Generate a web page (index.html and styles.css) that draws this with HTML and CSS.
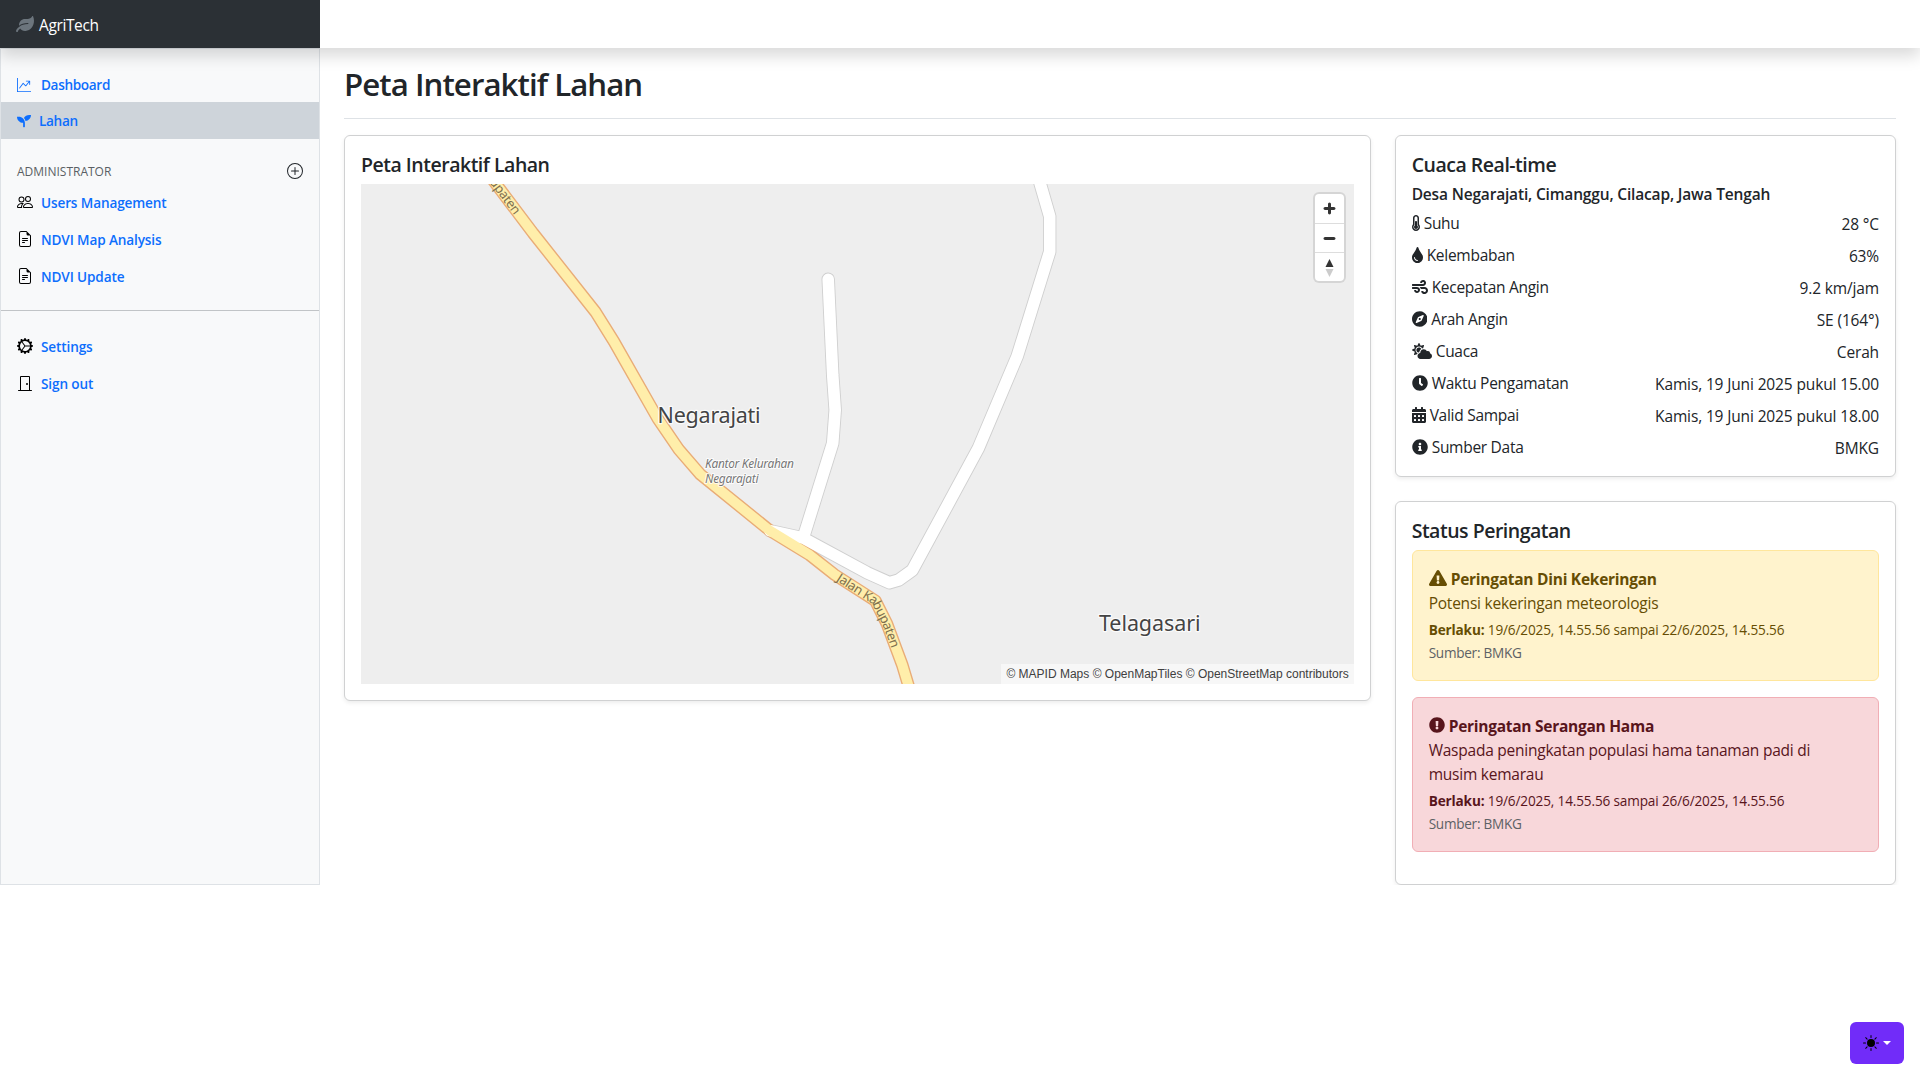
FILE: index.html
```html
<!DOCTYPE html>
<html lang="id">
<head>
<meta charset="utf-8">
<title>AgriTech - Peta Interaktif Lahan</title>
<link rel="stylesheet" href="styles.css">
</head>
<body>
<header class="navbar">
  <a class="brand" href="#">
    <svg class="brand-icon" viewBox="0 0 576 512"><path d="M546.2 9.7c-5.6-12.5-21.6-13-28.3-1.2C486.9 62.4 431.4 96 368 96h-80C182 96 96 182 96 288c0 7 .8 13.7 1.5 20.5C161.3 262.8 253.4 224 384 224c8.8 0 16 7.2 16 16s-7.2 16-16 16C132.6 256 26 410.1 2.4 468c-6.6 16.3 1.2 34.9 17.5 41.6 16.4 6.8 35-1.1 41.8-17.3 1.5-3.6 20.9-47.9 71.9-90.6 32.4 43.9 94 85.8 174.9 77.2C465.5 467.5 576 326.7 576 154.3c0-50.2-10.8-102.2-29.8-144.6z"/></svg>
    <span>AgriTech</span>
  </a>
</header>

<div class="layout">
  <nav class="sidebar">
    <a class="nav-link" href="#">
      <svg class="icon-small icon-chart" viewBox="0 0 16 16"><path fill-rule="evenodd" d="M0 0h1v15h15v1H0zm10 3.5a.5.5 0 0 1 .5-.5h4a.5.5 0 0 1 .5.5v4a.5.5 0 0 1-1 0V4.9l-3.613 4.417a.5.5 0 0 1-.74.037L7.06 6.767l-3.656 5.027a.5.5 0 0 1-.808-.588l4-5.5a.5.5 0 0 1 .758-.06l2.609 2.61L13.445 4H10.5a.5.5 0 0 1-.5-.5"/></svg>
      <span>Dashboard</span>
    </a>
    <a class="nav-link active" href="#">
      <svg class="icon-small" viewBox="0 0 512 512"><path d="M64 96H0c0 123.7 100.3 224 224 224v144c0 8.8 7.2 16 16 16h32c8.8 0 16-7.2 16-16V320C288 196.3 187.7 96 64 96zm384-64c-84.2 0-157.4 46.5-195.7 115.2 27.7 30.2 48.2 66.9 59 107.6C424 243.1 512 147.9 512 32h-64z"/></svg>
      <span>Lahan</span>
    </a>
    <div class="nav-heading">
      <span>Administrator</span>
      <svg viewBox="0 0 16 16"><path d="M8 15A7 7 0 1 1 8 1a7 7 0 0 1 0 14m0 1A8 8 0 1 0 8 0a8 8 0 0 0 0 16"/><path d="M8 4a.5.5 0 0 1 .5.5v3h3a.5.5 0 0 1 0 1h-3v3a.5.5 0 0 1-1 0v-3h-3a.5.5 0 0 1 0-1h3v-3A.5.5 0 0 1 8 4"/></svg>
    </div>
    <a class="nav-link" href="#">
      <svg class="icon" viewBox="0 0 16 16"><path d="M15 14s1 0 1-1-1-4-5-4-5 3-5 4 1 1 1 1zm-7.978-1L7 12.996c.001-.264.167-1.03.76-1.72C8.312 10.629 9.282 10 11 10c1.717 0 2.687.63 3.24 1.276.593.69.758 1.457.76 1.72l-.008.002-.014.002zM11 7a2 2 0 1 0 0-4 2 2 0 0 0 0 4m3-2a3 3 0 1 1-6 0 3 3 0 0 1 6 0M6.936 9.28a6 6 0 0 0-1.23-.247A7 7 0 0 0 5 9c-4 0-5 3-5 4q0 1 1 1h4.216A2.24 2.24 0 0 1 5 13c0-1.01.377-2.042 1.09-2.904.243-.294.526-.569.846-.816M4.92 10A5.5 5.5 0 0 0 4 13H1c0-.26.164-1.03.76-1.724.545-.636 1.492-1.256 3.16-1.275ZM1.5 5.5a3 3 0 1 1 6 0 3 3 0 0 1-6 0m3-2a2 2 0 1 0 0 4 2 2 0 0 0 0-4"/></svg>
      <span>Users Management</span>
    </a>
    <a class="nav-link" href="#">
      <svg class="icon" viewBox="0 0 16 16"><path d="M5.5 7a.5.5 0 0 0 0 1h5a.5.5 0 0 0 0-1zM5 9.5a.5.5 0 0 1 .5-.5h5a.5.5 0 0 1 0 1h-5a.5.5 0 0 1-.5-.5m0 2a.5.5 0 0 1 .5-.5h2a.5.5 0 0 1 0 1h-2a.5.5 0 0 1-.5-.5"/><path d="M9.5 0H4a2 2 0 0 0-2 2v12a2 2 0 0 0 2 2h8a2 2 0 0 0 2-2V4.5zm0 1v2A1.5 1.5 0 0 0 11 4.5h2V14a1 1 0 0 1-1 1H4a1 1 0 0 1-1-1V2a1 1 0 0 1 1-1z"/></svg>
      <span>NDVI Map Analysis</span>
    </a>
    <a class="nav-link" href="#">
      <svg class="icon" viewBox="0 0 16 16"><path d="M5.5 7a.5.5 0 0 0 0 1h5a.5.5 0 0 0 0-1zM5 9.5a.5.5 0 0 1 .5-.5h5a.5.5 0 0 1 0 1h-5a.5.5 0 0 1-.5-.5m0 2a.5.5 0 0 1 .5-.5h2a.5.5 0 0 1 0 1h-2a.5.5 0 0 1-.5-.5"/><path d="M9.5 0H4a2 2 0 0 0-2 2v12a2 2 0 0 0 2 2h8a2 2 0 0 0 2-2V4.5zm0 1v2A1.5 1.5 0 0 0 11 4.5h2V14a1 1 0 0 1-1 1H4a1 1 0 0 1-1-1V2a1 1 0 0 1 1-1z"/></svg>
      <span>NDVI Update</span>
    </a>
    <hr class="nav-divider">
    <a class="nav-link" href="#">
      <svg class="icon" viewBox="0 0 16 16"><path d="M7.068.727c.243-.97 1.62-.97 1.864 0l.071.286a.96.96 0 0 0 1.622.434l.205-.211c.695-.719 1.888-.03 1.613.931l-.08.284a.96.96 0 0 0 1.187 1.187l.283-.081c.96-.275 1.65.918.931 1.613l-.211.205a.96.96 0 0 0 .434 1.622l.286.071c.97.243.97 1.62 0 1.864l-.286.071a.96.96 0 0 0-.434 1.622l.211.205c.719.695.03 1.888-.931 1.613l-.284-.08a.96.96 0 0 0-1.187 1.187l.081.283c.275.96-.918 1.65-1.613.931l-.205-.211a.96.96 0 0 0-1.622.434l-.071.286c-.243.97-1.62.97-1.864 0l-.071-.286a.96.96 0 0 0-1.622-.434l-.205.211c-.695.719-1.888.03-1.613-.931l.08-.284a.96.96 0 0 0-1.186-1.187l-.284.081c-.96.275-1.65-.918-.931-1.613l.211-.205a.96.96 0 0 0-.434-1.622l-.286-.071c-.97-.243-.97-1.62 0-1.864l.286-.071a.96.96 0 0 0 .434-1.622l-.211-.205c-.719-.695-.03-1.888.931-1.613l.284.08a.96.96 0 0 0 1.187-1.186l-.081-.284c-.275-.96.918-1.65 1.613-.931l.205.211a.96.96 0 0 0 1.622-.434zM12.973 8.5H8.25l-2.834 3.779A4.998 4.998 0 0 0 12.973 8.5m0-1a4.998 4.998 0 0 0-7.557-3.779l2.834 3.78zM5.048 3.967l-.087.065zm-.431.355A4.98 4.98 0 0 0 3.002 8c0 1.455.622 2.765 1.615 3.678L7.375 8zm.344 7.646.087.065z"/></svg>
      <span>Settings</span>
    </a>
    <a class="nav-link" href="#">
      <svg class="icon" viewBox="0 0 16 16"><path d="M3 2a1 1 0 0 1 1-1h8a1 1 0 0 1 1 1v13h1.5a.5.5 0 0 1 0 1h-13a.5.5 0 0 1 0-1H3zm1 13h8V2H4z"/><path d="M9 9a1 1 0 1 0 2 0 1 1 0 0 0-2 0"/></svg>
      <span>Sign out</span>
    </a>
  </nav>

  <main class="main">
    <div class="page-head"><h1>Peta Interaktif Lahan</h1></div>
    <div class="columns">
      <section class="card">
        <h2>Peta Interaktif Lahan</h2>
        <div class="map">
          <svg class="map-canvas" viewBox="361 184 993 500">
            <defs>
              <path id="label-south" d="M834.7 574.7L875.3 600.7L886.7 623.3L902.3 665L912 697"/>
              <path id="label-north" d="M435 105L496 184L533 233"/>
            </defs>
            <g class="road minor casing">
              <path d="M770 530.7L803 538L867 572.7L889.3 582.7L898.7 580L912.3 570.3L978.3 448.3L1017.3 356L1049.7 251.7V216.3L1037.4 174"/>
              <path d="M828.2 279.3L832.7 375L835.2 410L832.7 443.3L803.5 537"/>
            </g>
            <path class="road major casing" d="M484 168L496 184L533 233L595.5 312L614 341.7L658 419L679 449.7L700.3 474.3L770 530.7L809.7 555L834.7 574.7L875.3 600.7L886.7 623.3L902.3 665L911 694"/>
            <g class="road minor fill">
              <path d="M770 530.7L803 538L867 572.7L889.3 582.7L898.7 580L912.3 570.3L978.3 448.3L1017.3 356L1049.7 251.7V216.3L1037.4 174"/>
              <path d="M828.2 279.3L832.7 375L835.2 410L832.7 443.3L803.5 537"/>
            </g>
            <path class="road major fill" d="M484 168L496 184L533 233L595.5 312L614 341.7L658 419L679 449.7L700.3 474.3L770 530.7L809.7 555L834.7 574.7L875.3 600.7L886.7 623.3L902.3 665L911 694"/>
            <text class="road-label" dy="4.3"><textPath href="#label-south" startOffset="4" textLength="95">Jalan Kabupaten</textPath></text>
            <text class="road-label" dy="4.3"><textPath href="#label-north" startOffset="94" textLength="42">upaten</textPath></text>
            <text class="place" x="657.6" y="422.7" textLength="103">Negarajati</text>
            <text class="place" x="1099" y="630.7" textLength="101.5">Telagasari</text>
            <text class="poi" x="705" y="468" textLength="89">Kantor Kelurahan</text>
            <text class="poi" x="705" y="482.8" textLength="53.5">Negarajati</text>
          </svg>
          <div class="map-controls">
            <button type="button"><svg viewBox="0 0 29 29"><path d="M14.5 8.5c-.75 0-1.5.75-1.5 1.5v3h-3c-.75 0-1.5.75-1.5 1.5S9.25 16 10 16h3v3c0 .75.75 1.5 1.5 1.5S16 19.750 16 19v-3h3c.75 0 1.5-.75 1.5-1.5S19.750 13 19 13h-3v-3c0-.75-.75-1.5-1.5-1.5"/></svg></button>
            <button type="button"><svg viewBox="0 0 29 29"><path d="M10 13c-.75 0-1.5.75-1.5 1.5S9.25 16 10 16h9c.75 0 1.5-.75 1.5-1.5S19.750 13 19 13z"/></svg></button>
            <button type="button"><svg viewBox="0 0 29 29"><path d="m10.5 14 4-8 4 8z"/><path class="south" d="m10.5 16 4 8 4-8z"/></svg></button>
          </div>
          <div class="attribution">© MAPID Maps © OpenMapTiles © OpenStreetMap contributors</div>
        </div>
      </section>

      <div class="side">
        <section class="card">
          <h2>Cuaca Real-time</h2>
          <h3>Desa Negarajati, Cimanggu, Cilacap, Jawa Tengah</h3>
          <ul class="weather">
            <li><span class="label"><svg width="8" viewBox="0 0 256 512"><path d="M192 384c0 35.346-28.654 64-64 64s-64-28.654-64-64c0-23.685 12.876-44.349 32-55.417V224c0-17.673 14.327-32 32-32s32 14.327 32 32v104.583c19.124 11.068 32 31.732 32 55.417zm32-84.653c19.912 22.563 32 52.194 32 84.653 0 70.696-57.303 128-128 128-.299 0-.609-.001-.909-.003C56.789 511.509-.357 453.636.002 383.333.166 351.135 12.245 321.756 32 299.347V96c0-53.019 42.981-96 96-96s96 42.981 96 96v203.347zM208 384c0-34.339-19.37-52.19-32-66.502V96c0-26.467-21.533-48-48-48S80 69.533 80 96v221.498c-12.732 14.428-31.825 32.1-31.999 66.08-.224 43.876 35.563 80.116 79.423 80.42L128 464c44.112 0 80-35.888 80-80z"/></svg>Suhu</span><span>28 °C</span></li>
            <li><span class="label"><svg width="11" viewBox="0 0 352 512"><path d="M205.22 22.09c-7.94-28.78-49.44-30.12-58.44 0C100.01 179.85 0 222.72 0 333.91 0 432.35 78.72 512 176 512s176-79.65 176-178.09c0-111.75-99.79-153.34-146.78-311.82zM176 448c-61.75 0-112-50.25-112-112 0-8.84 7.16-16 16-16s16 7.16 16 16c0 44.11 35.89 80 80 80 8.84 0 16 7.16 16 16s-7.16 16-16 16z"/></svg>Kelembaban</span><span>63%</span></li>
            <li><span class="label"><svg width="16" viewBox="0 0 512 512"><path d="M156.7 256H16c-8.8 0-16 7.2-16 16v32c0 8.8 7.2 16 16 16h142.2c15.9 0 30.8 10.9 33.4 26.6 3.3 20-12.1 37.4-31.6 37.4-14.1 0-26.1-9.2-30.4-21.9-2.1-6.3-8.6-10.1-15.2-10.1H81.6c-9.8 0-17.7 8.8-15.9 18.4 8.6 44.1 47.6 77.6 94.2 77.6 57.1 0 102.7-50.1 95.2-108.6C249 291 205.4 256 156.7 256zM16 224h336c59.7 0 106.8-54.8 93.8-116.7-7.6-36.2-36.9-65.5-73.1-73.1-55.4-11.6-105.1 24.9-114.9 75.5-1.9 9.6 6.1 18.3 15.8 18.3h32.8c6.7 0 13.1-3.8 15.2-10.1C325.9 105.2 337.9 96 352 96c19.4 0 34.9 17.4 31.6 37.4-2.6 15.7-17.4 26.6-33.4 26.6H16c-8.8 0-16 7.2-16 16v32c0 8.8 7.2 16 16 16zm384 32H243.7c19.3 16.6 33.2 38.8 39.8 64H400c26.5 0 48 21.5 48 48s-21.5 48-48 48c-17.9 0-33.3-9.9-41.6-24.4-2.9-5-8.7-7.6-14.5-7.6h-33.8c-10.9 0-19 10.8-15.3 21.1 17.8 50.6 70.5 84.8 129.4 72.3 41.2-8.7 75.1-41.6 84.7-82.7C526 321.5 470.5 256 400 256z"/></svg>Kecepatan Angin</span><span>9.2 km/jam</span></li>
            <li><span class="label"><svg width="15.5" viewBox="0 0 496 512"><path d="M225.38 233.37c-12.5 12.5-12.5 32.76 0 45.25 12.49 12.5 32.76 12.5 45.25 0 12.5-12.5 12.5-32.76 0-45.25-12.5-12.49-32.76-12.49-45.25 0zM248 8C111.03 8 0 119.03 0 256s111.03 248 248 248 248-111.03 248-248S384.97 8 248 8zm126.14 148.05L308.17 300.4a31.938 31.938 0 0 1-15.77 15.77l-144.34 65.97c-16.65 7.61-33.81-9.55-26.2-26.2l65.98-144.35a31.938 31.938 0 0 1 15.77-15.77l144.34-65.97c16.65-7.6 33.8 9.55 26.19 26.2z"/></svg>Arah Angin</span><span>SE (164°)</span></li>
            <li><span class="label"><svg width="20" viewBox="0 0 640 512"><path d="M575.2 325.7c.2-1.9.8-3.7.8-5.6 0-35.3-28.7-64-64-64-12.6 0-24.2 3.8-34.1 10-17.6-38.8-56.5-66-101.9-66-61.8 0-112 50.1-112 112 0 3 .7 5.8.9 8.7-49.6 3.7-88.9 44.7-88.9 95.3 0 53 43 96 96 96h272c53 0 96-43 96-96 0-42.1-27.2-77.4-64.8-90.4zm-430.4-22.6c-43.7-43.7-43.7-114.7 0-158.3 43.7-43.7 114.7-43.7 158.4 0 9.7 9.7 16.9 20.9 22.3 32.7 9.8-3.7 20.1-6 30.7-7.5L386 81.1c4-11.9-7.3-23.1-19.2-19.2L279 91.2 237.5 8.4C232-2.8 216-2.8 210.4 8.4L169 91.2 81.1 61.9C69.3 58 58 69.3 61.9 81.1l29.3 87.8-82.8 41.5c-11.2 5.6-11.2 21.5 0 27.1l82.8 41.4-29.3 87.8c-4 11.9 7.3 23.1 19.2 19.2l76.1-25.3c6.1-12.4 14-23.7 23.6-33.5-13-5.4-25.4-13.4-36-24zm-4.8-79.2c0 40.8 29.3 74.8 67.9 82.3 8-4.7 16.3-8.8 25.2-11.7 5.4-44.3 31-82.5 67.4-105C287.3 160.4 258 140 224 140c-46.3 0-84 37.6-84 83.9z"/></svg>Cuaca</span><span>Cerah</span></li>
            <li><span class="label"><svg width="16" viewBox="0 0 512 512"><path d="M256 8C119 8 8 119 8 256s111 248 248 248 248-111 248-248S393 8 256 8zm92.49 313l-20 25a16 16 0 0 1-22.49 2.5l-67-49.72a40 40 0 0 1-15-31.23V112a16 16 0 0 1 16-16h32a16 16 0 0 1 16 16v144l58 42.5a16 16 0 0 1 2.49 22.5z"/></svg>Waktu Pengamatan</span><span>Kamis, 19 Juni 2025 pukul 15.00</span></li>
            <li><span class="label"><svg width="14" viewBox="0 0 448 512"><path fill-rule="evenodd" d="M0 464c0 26.5 21.5 48 48 48h352c26.5 0 48-21.5 48-48V192H0zM64 268q0-12 12-12h40q12 0 12 12v40q0 12-12 12H76q-12 0-12-12zm128 0q0-12 12-12h40q12 0 12 12v40q0 12-12 12h-40q-12 0-12-12zm128 0q0-12 12-12h40q12 0 12 12v40q0 12-12 12h-40q-12 0-12-12zM64 396q0-12 12-12h40q12 0 12 12v40q0 12-12 12H76q-12 0-12-12zm128 0q0-12 12-12h40q12 0 12 12v40q0 12-12 12h-40q-12 0-12-12zm128 0q0-12 12-12h40q12 0 12 12v40q0 12-12 12h-40q-12 0-12-12zM400 64h-48V16c0-8.8-7.2-16-16-16h-32c-8.8 0-16 7.2-16 16v48H160V16c0-8.8-7.2-16-16-16h-32c-8.8 0-16 7.2-16 16v48H48C21.5 64 0 85.5 0 112v48h448v-48c0-26.5-21.5-48-48-48z"/></svg>Valid Sampai</span><span>Kamis, 19 Juni 2025 pukul 18.00</span></li>
            <li><span class="label"><svg width="16" viewBox="0 0 512 512"><path d="M256 8C119.043 8 8 119.083 8 256c0 136.997 111.043 248 248 248s248-111.003 248-248C504 119.083 392.957 8 256 8zm0 110c23.196 0 42 18.804 42 42s-18.804 42-42 42-42-18.804-42-42 18.804-42 42-42zm56 254c0 6.627-5.373 12-12 12h-88c-6.627 0-12-5.373-12-12v-24c0-6.627 5.373-12 12-12h12v-64h-12c-6.627 0-12-5.373-12-12v-24c0-6.627 5.373-12 12-12h64c6.627 0 12 5.373 12 12v100h12c6.627 0 12 5.373 12 12v24z"/></svg>Sumber Data</span><span>BMKG</span></li>
          </ul>
        </section>

        <section class="card">
          <h2>Status Peringatan</h2>
          <div class="alert warning">
            <div class="alert-title"><svg width="18" viewBox="0 0 576 512"><path d="M569.517 440.013C587.975 472.007 564.806 512 527.94 512H48.054c-36.937 0-59.999-40.055-41.577-71.987L246.423 23.985c18.467-32.009 64.72-31.951 83.154 0l239.94 416.028zM288 354c-25.405 0-46 20.595-46 46s20.595 46 46 46 46-20.595 46-46-20.595-46-46-46zm-43.673-165.346l7.418 136c.347 6.364 5.609 11.346 11.982 11.346h48.546c6.373 0 11.635-4.982 11.982-11.346l7.418-136c.375-6.874-5.098-12.654-11.982-12.654h-63.383c-6.884 0-12.356 5.78-11.981 12.654z"/></svg>Peringatan Dini Kekeringan</div>
            <p>Potensi kekeringan meteorologis</p>
            <div class="period"><strong>Berlaku:</strong> 19/6/2025, 14.55.56 sampai 22/6/2025, 14.55.56</div>
            <div class="source">Sumber: BMKG</div>
          </div>
          <div class="alert danger">
            <div class="alert-title"><svg width="16" viewBox="0 0 512 512"><path d="M504 256c0 136.997-111.043 248-248 248S8 392.997 8 256C8 119.083 119.043 8 256 8s248 111.083 248 248zm-248 50c-25.405 0-46 20.595-46 46s20.595 46 46 46 46-20.595 46-46-20.595-46-46-46zm-43.673-165.346l7.418 136c.347 6.364 5.609 11.346 11.982 11.346h48.546c6.373 0 11.635-4.982 11.982-11.346l7.418-136c.375-6.874-5.098-12.654-11.982-12.654h-63.383c-6.884 0-12.356 5.78-11.981 12.654z"/></svg>Peringatan Serangan Hama</div>
            <p>Waspada peningkatan populasi hama tanaman padi di musim kemarau</p>
            <div class="period"><strong>Berlaku:</strong> 19/6/2025, 14.55.56 sampai 26/6/2025, 14.55.56</div>
            <div class="source">Sumber: BMKG</div>
          </div>
        </section>
      </div>
    </div>
  </main>
</div>

<button class="theme-toggle" type="button">
  <svg viewBox="0 0 16 16"><path d="M8 12a4 4 0 1 0 0-8 4 4 0 0 0 0 8M8 0a.5.5 0 0 1 .5.5v2a.5.5 0 0 1-1 0v-2A.5.5 0 0 1 8 0m0 13a.5.5 0 0 1 .5.5v2a.5.5 0 0 1-1 0v-2A.5.5 0 0 1 8 13m8-5a.5.5 0 0 1-.5.5h-2a.5.5 0 0 1 0-1h2a.5.5 0 0 1 .5.5M3 8a.5.5 0 0 1-.5.5h-2a.5.5 0 0 1 0-1h2A.5.5 0 0 1 3 8m10.657-5.657a.5.5 0 0 1 0 .707l-1.414 1.415a.5.5 0 1 1-.707-.708l1.414-1.414a.5.5 0 0 1 .707 0m-9.193 9.193a.5.5 0 0 1 0 .707L3.05 13.657a.5.5 0 0 1-.707-.707l1.414-1.414a.5.5 0 0 1 .707 0m9.193 2.121a.5.5 0 0 1-.707 0l-1.414-1.414a.5.5 0 0 1 .707-.707l1.414 1.414a.5.5 0 0 1 0 .707M4.464 4.465a.5.5 0 0 1-.707 0L2.343 3.05a.5.5 0 1 1 .707-.707l1.414 1.414a.5.5 0 0 1 0 .708"/></svg>
  <span class="caret"></span>
</button>
</body>
</html>
```
FILE: styles.css
```css
* { box-sizing: border-box; }

body {
  margin: 0;
  background: #fff;
  color: #212529;
  font: 15.5px/24px "Open Sans", "Liberation Sans", sans-serif;
  letter-spacing: -0.015em;
}

h1, h2, h3, p, ul { margin: 0; padding: 0; }
h1, h2, h3 { font-weight: 550; }
a { text-decoration: none; }
svg { fill: currentColor; flex: none; }

/* Top bar */
.navbar {
  position: relative;
  z-index: 2;
  height: 48px;
  background: #fff;
  box-shadow: 0 8px 16px rgba(0, 0, 0, .15);
}
.brand {
  display: flex;
  align-items: center;
  gap: 5px;
  width: 320px;
  height: 48px;
  padding: 0 16px;
  background: #2b3035;
  color: #fff;
  letter-spacing: -0.025em;
}
.brand span { padding-top: 1px; }
.brand-icon { width: 18px; height: 16px; color: #6c757d; }

/* Sidebar */
.layout { display: flex; }
.sidebar {
  flex: 0 0 320px;
  padding-top: 16px;
  border: 1px solid #dee2e6;
  background: #f8f9fa;
}
.nav-link {
  display: flex;
  align-items: center;
  gap: 8px;
  height: 37px;
  padding: 0 16px;
  color: #0d6efd;
  font-size: 13.6px;
  font-weight: 600;
  letter-spacing: -0.01em;
}
.nav-link span { padding-top: 2px; }
.nav-link.active { background: #ced4da; }
.nav-link.active span { padding-top: 1px; letter-spacing: -0.025em; }
.icon { width: 16px; height: 16px; color: #000; }
.icon-small { width: 14px; height: 14px; }
.icon-chart { margin: 3px 2px 0 0; }
.icon-chart + span { letter-spacing: -0.025em; }
.nav-heading {
  display: flex;
  align-items: center;
  justify-content: space-between;
  height: 16px;
  margin: 24px 16px 4.4px;
  color: #5a5f64;
  font-size: 12px;
  font-weight: 450;
  letter-spacing: 0;
  text-transform: uppercase;
}
.nav-heading span { padding-top: 2px; }
.nav-heading svg { width: 16px; height: 16px; color: #212529; }
.nav-divider {
  height: 1px;
  margin: 16px 0;
  border: 0;
  background: #c1c4c7;
}

/* Content */
.main { flex: 1; padding: 17px 24px 0; }
.page-head {
  margin-bottom: 16px;
  padding-bottom: 15px;
  border-bottom: 1px solid #dee2e6;
}
h1 { font-size: 31.2px; line-height: 38.4px; letter-spacing: -0.03em; }
.columns {
  display: grid;
  grid-template-columns: minmax(0, 1026.67fr) minmax(0, 501.33fr);
  gap: 24px;
  align-items: start;
}
.side { display: grid; gap: 24px; }
.card {
  padding: 17px 16px 16px;
  border: 1px solid #d0d1d2;
  border-radius: 6px;
  background: #fff;
  box-shadow: 0 2px 4px rgba(0, 0, 0, .075);
}
h2 { margin-bottom: 7px; font-size: 19.5px; line-height: 24px; letter-spacing: -0.025em; }
h3 { padding-top: 1px; margin-bottom: 7px; font-size: 15.5px; line-height: 19.2px; letter-spacing: -0.011em; }

/* Map */
.map { position: relative; height: 500px; overflow: hidden; background: #eee; }
.map-canvas { display: block; width: 993px; height: 500px; }
.road { fill: none; stroke-linejoin: round; stroke-linecap: round; }
.minor.casing { stroke: #cfcfcf; stroke-width: 13.4px; }
.minor.fill { stroke: #fff; stroke-width: 11.6px; }
.major.casing { stroke: #e9ac77; stroke-width: 12.6px; }
.major.fill { stroke: #fea; stroke-width: 9.8px; }
.map-canvas text { font-family: "Noto Sans", "Open Sans", sans-serif; letter-spacing: 0; }
.place, .poi { paint-order: stroke; stroke: rgba(255, 255, 255, .8); stroke-linejoin: round; }
.place { fill: #444; font-size: 21.5px; stroke-width: 2.4px; }
.poi { fill: #777; font-size: 12px; font-style: italic; stroke-width: 2px; }
.road-label { fill: #80704e; font-size: 13px; }

.map-controls {
  position: absolute;
  top: 10px;
  right: 10px;
  border-radius: 4px;
  background: #fff;
  box-shadow: 0 0 0 2px rgba(0, 0, 0, .1);
}
.map-controls button {
  display: block;
  width: 29px;
  height: 29px;
  padding: 0;
  border: 0;
  background: none;
  color: #333;
}
.map-controls button + button { border-top: 1px solid #ddd; }
.map-controls svg { display: block; width: 29px; height: 29px; }
.map-controls .south { fill: #ccc; }
.attribution {
  position: absolute;
  right: 0;
  bottom: 0;
  padding: 0 5px;
  background: rgba(255, 255, 255, .5);
  color: #404040;
  font: 12px/20px "Liberation Sans", Arial, sans-serif;
  letter-spacing: 0;
}

/* Weather */
.weather { display: grid; gap: 8px; list-style: none; }
.weather li {
  display: flex;
  justify-content: space-between;
  height: 24px;
  line-height: 25px;
  letter-spacing: -0.009em;
}
.weather .label { letter-spacing: -0.018em; }
.label, .alert-title { display: flex; align-items: center; gap: 4px; }
.label svg, .alert-title svg { height: 16px; margin-top: -1px; }

/* Warnings */
.alert { margin-bottom: 16px; padding: 16px; border: 1px solid; border-radius: 6px; }
.warning { border-color: #ffe69c; background: #fff3cd; color: #664d03; }
.danger { border-color: #f1aeb5; background: #f8d7da; color: #58151c; }
.alert-title { font-weight: 700; letter-spacing: -0.017em; }
.period { margin-top: 4px; font-size: 13.6px; line-height: 21px; letter-spacing: -0.011em; }
.source { padding-top: 1px; color: #5d6165; font-size: 13.6px; line-height: 23px; letter-spacing: -0.02em; }

/* Theme switcher */
.theme-toggle {
  position: fixed;
  right: 16px;
  bottom: 16px;
  display: flex;
  align-items: center;
  gap: 4px;
  width: 54px;
  height: 42px;
  padding: 0 13px;
  border: 0;
  border-radius: 6px;
  background: #712cf9;
}
.theme-toggle svg { width: 16px; height: 16px; fill: #000; }
.caret {
  border-top: 4.8px solid #fff;
  border-right: 4.8px solid transparent;
  border-left: 4.8px solid transparent;
}
```
